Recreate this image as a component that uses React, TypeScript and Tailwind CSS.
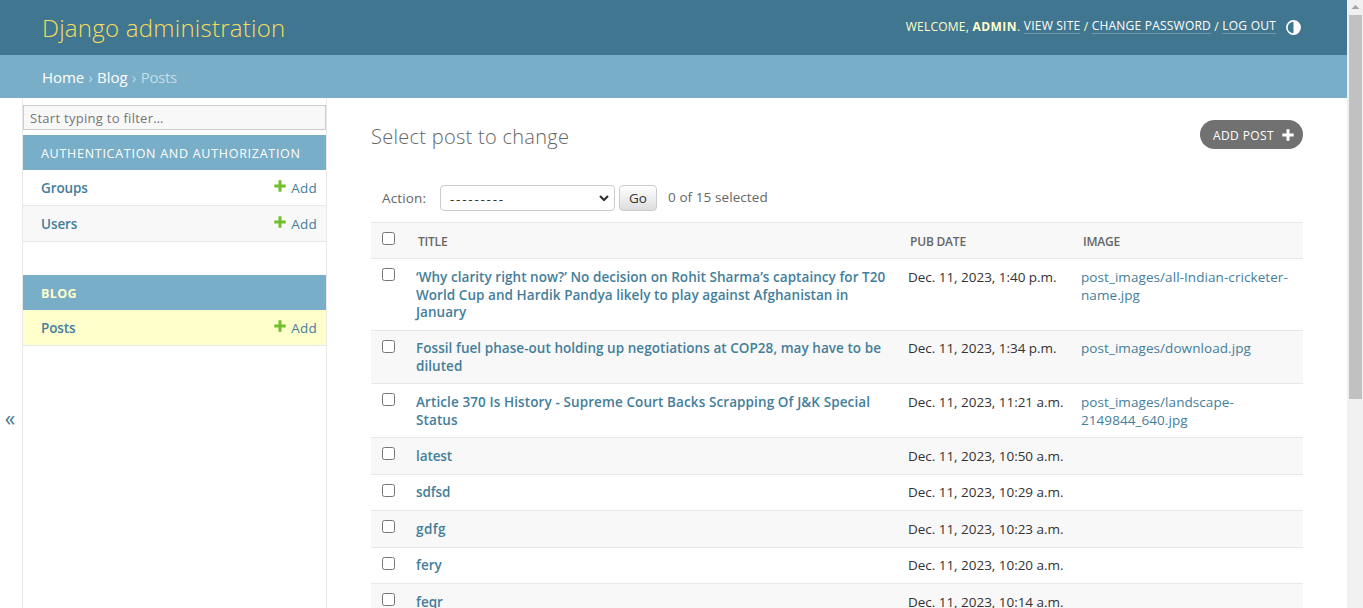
import React from "react";

type Post = { title: string[]; date: string; image: string[]; height: string; pad: string; tracking: string };

const posts: Post[] = [
  {
    title: [
      "‘Why clarity right now?’ No decision on Rohit Sharma’s captaincy for T20",
      "World Cup and Hardik Pandya likely to play against Afghanistan in",
      "January",
    ],
    date: "Dec. 11, 2023, 1:40 p.m.",
    image: ["post_images/all-Indian-cricketer-", "name.jpg"],
    height: "h-[72px]",
    pad: "pt-[10px]",
    tracking: "tracking-[0.05px]",
  },
  {
    title: ["Fossil fuel phase-out holding up negotiations at COP28, may have to be", "diluted"],
    date: "Dec. 11, 2023, 1:34 p.m.",
    image: ["post_images/download.jpg"],
    height: "h-[53px]",
    pad: "pt-[9px]",
    tracking: "tracking-[0.05px]",
  },
  {
    title: ["Article 370 Is History - Supreme Court Backs Scrapping Of J&K Special", "Status"],
    date: "Dec. 11, 2023, 11:21 a.m.",
    image: ["post_images/landscape-", "2149844_640.jpg"],
    height: "h-[54px]",
    pad: "pt-[10px]",
    tracking: "tracking-[0.1px]",
  },
  { title: ["latest"], date: "Dec. 11, 2023, 10:50 a.m.", image: [], height: "h-[37px]", pad: "pt-[10px]", tracking: "tracking-[-0.1px]" },
  { title: ["sdfsd"], date: "Dec. 11, 2023, 10:29 a.m.", image: [], height: "h-[36px]", pad: "pt-[9px]", tracking: "tracking-[-0.1px]" },
  { title: ["gdfg"], date: "Dec. 11, 2023, 10:23 a.m.", image: [], height: "h-[37px]", pad: "pt-[10px]", tracking: "tracking-[0.4px]" },
  { title: ["fery"], date: "Dec. 11, 2023, 10:20 a.m.", image: [], height: "h-[36px]", pad: "pt-[9px]", tracking: "tracking-normal" },
  { title: ["feqr"], date: "Dec. 11, 2023, 10:14 a.m.", image: [], height: "h-[37px]", pad: "pt-[10px]", tracking: "tracking-normal" },
];

function Lines({ lines }: { lines: string[] }) {
  return (
    <>
      {lines.map((line) => (
        <span key={line} className="block whitespace-nowrap">
          {line}
        </span>
      ))}
    </>
  );
}

function Checkbox() {
  return <input type="checkbox" className="mt-[9px] ml-[11px] block size-[13px]" />;
}

function SideRow({ name, className }: { name: string; className: string }) {
  return (
    <div className={`flex h-9 items-center justify-between border-b border-[#e8e8e8] pt-0.5 pr-[9px] pl-[18px] text-[13.5px] text-[#447e9b] ${className}`}>
      <a className="font-semibold tracking-[-0.1px]">{name}</a>
      <a className="flex items-center gap-[5px] tracking-[0.2px]">
        <svg className="mb-[5px] size-3" viewBox="0 0 12 12" fill="#70bf2b">
          <path d="M4.5 0.3h3v4.2h4.2v3H7.5v4.2h-3V7.5H0.3v-3h4.2z" />
        </svg>
        Add
      </a>
    </div>
  );
}

const columns = "grid grid-cols-[45px_492px_173px_1fr]";

export default function App() {
  return (
    <div className="flex h-[608px] w-[1363px] overflow-hidden bg-white font-['Open_Sans','Noto_Sans',sans-serif] text-[13.5px] text-[#333]">
      <div className="flex w-[1347px] flex-col">
        <header className="flex h-[55px] shrink-0 items-center justify-between bg-[#417690] pr-[46px] pl-[42px]">
          <h1 className="text-[24px] leading-[30px] font-light tracking-[0.25px] whitespace-nowrap text-[#f5dd5d]">Django administration</h1>
          <div className="flex items-center pb-[3px] text-[12px] leading-[15px] tracking-[0.22px] whitespace-pre text-[#ffc]">
            <span>WELCOME, </span>
            <strong className="font-bold tracking-[0.5px]">ADMIN</strong>
            <span>. </span>
            <a className="border-b border-white/25 text-white">VIEW SITE</a>
            <span> / </span>
            <a className="border-b border-white/25 text-white">CHANGE PASSWORD</a>
            <span> / </span>
            <a className="border-b border-white/25 text-white">LOG OUT</a>
            <svg className="mt-[2px] ml-[10px] size-[15px]" viewBox="0 0 15 15">
              <circle cx="7.5" cy="7.5" r="6.6" fill="none" stroke="#fff" strokeWidth="1.6" />
              <path d="M7.5 0.8a6.7 6.7 0 0 1 0 13.4z" fill="#fff" />
            </svg>
          </div>
        </header>
        <nav className="flex h-[43px] shrink-0 items-center bg-[#79aec8] pt-0.5 pl-[42px] text-[15px] text-[#c4dce8]">
          <a className="tracking-[-0.1px] text-white">Home</a>
          <span className="w-[13px] text-center text-[14px]">›</span>
          <a className="text-white">Blog</a>
          <span className="w-[13px] text-center text-[14px]">›</span>
          <span className="tracking-[-0.3px]">Posts</span>
        </nav>
        <div className="flex min-h-0 flex-1">
          <button className="w-[22px] shrink-0 pt-[132px] pr-0.5 text-center text-[21px] text-[#417690]">«</button>
          <aside className="w-[305px] shrink-0 border-x border-[#e8e8e8] pt-[7px]">
            <input
              className="block h-[25px] w-full border border-[#ccc] bg-[#f8f8f8] px-1.5 text-[13px] tracking-[0.28px] placeholder:text-[#757575]"
              placeholder="Start typing to filter…"
            />
            <h2 className="mt-[5px] flex h-[35px] items-center bg-[#79aec8] pt-[3px] pl-[18px] text-[12.5px] tracking-[0.72px] whitespace-nowrap text-white">
              AUTHENTICATION AND AUTHORIZATION
            </h2>
            <SideRow name="Groups" className="bg-white" />
            <SideRow name="Users" className="bg-[#f8f8f8]" />
            <h2 className="mt-[33px] flex h-[35px] items-center bg-[#79aec8] pt-[3px] pl-[18px] text-[12.5px] font-bold tracking-[0.4px] text-[#ffc]">BLOG</h2>
            <SideRow name="Posts" className="bg-[#ffc]" />
          </aside>
          <main className="min-w-0 flex-1 pr-11 pl-11">
            <div className="flex h-[87px] justify-between pt-[22px]">
              <h1 className="pt-[2px] text-[20px] leading-[30px] font-light tracking-[0.28px] whitespace-nowrap text-[#666]">Select post to change</h1>
              <a className="flex h-[29px] w-[103px] items-center justify-between rounded-full bg-[#717171] pr-[9px] pl-[13px] text-[12px] tracking-[0.4px] whitespace-nowrap text-white">
                <span className="pt-0.5">ADD POST</span>
                <svg className="size-3" viewBox="0 0 12 12" fill="#fff">
                  <path d="M4.5 0.3h3v4.2h4.2v3H7.5v4.2h-3V7.5H0.3v-3h4.2z" />
                </svg>
              </a>
            </div>
            <div className="flex h-[26px] items-center pl-[11px] text-[#666]">
              <span className="w-[58px] tracking-[0.15px]">Action:</span>
              <div className="flex h-[26px] w-[175px] items-center justify-between rounded border border-[#ccc] bg-white pr-[5px] pl-[9px] text-[#333]">
                <span className="pt-0.5 tracking-[1.75px]">---------</span>
                <svg className="size-[10px]" viewBox="0 0 10 10" fill="none" stroke="#333" strokeWidth="2.2">
                  <path d="M1 3l4 4 4-4" />
                </svg>
              </div>
              <button className="ml-1 h-[26px] w-[38px] rounded border border-[#ccc] bg-linear-to-b from-white to-[#ddd] text-[#333]">Go</button>
              <span className="pb-px pl-[11px] tracking-[0.08px]">0 of 15 selected</span>
            </div>
            <div className="mt-[11px]">
              <div className={`${columns} h-9 border-t border-[#e8e8e8] bg-[#f8f8f8] text-[12px] font-semibold tracking-[-0.2px] text-[#666]`}>
                <Checkbox />
                <span className="pt-[10px] pl-0.5">TITLE</span>
                <span className="pt-[10px] pl-0.5">PUB DATE</span>
                <span className="pt-[10px] pl-0.5">IMAGE</span>
              </div>
              {posts.map((post) => (
                <div key={post.date} className={`${columns} ${post.height} border-t border-[#e8e8e8] leading-[17.7px] odd:bg-[#f8f8f8] even:bg-white`}>
                  <Checkbox />
                  <a className={`font-semibold text-[#447e9b] ${post.pad} ${post.tracking}`}>
                    <Lines lines={post.title} />
                  </a>
                  <span className={`tracking-[-0.03px] whitespace-nowrap ${post.pad}`}>{post.date}</span>
                  <a className={`tracking-[0.07px] text-[#447e9b] ${post.pad}`}>
                    <Lines lines={post.image} />
                  </a>
                </div>
              ))}
            </div>
          </main>
        </div>
      </div>
      <div className="flex w-4 flex-col items-center bg-[#f0f0f0]">
        <svg className="h-[15px] w-4" viewBox="0 0 16 15" fill="#a3a3a3">
          <path d="M4.5 9h8L8.500 5z" />
        </svg>
        <div className="h-[384px] w-[13px] bg-[#c1c1c1]" />
      </div>
    </div>
  );
}
